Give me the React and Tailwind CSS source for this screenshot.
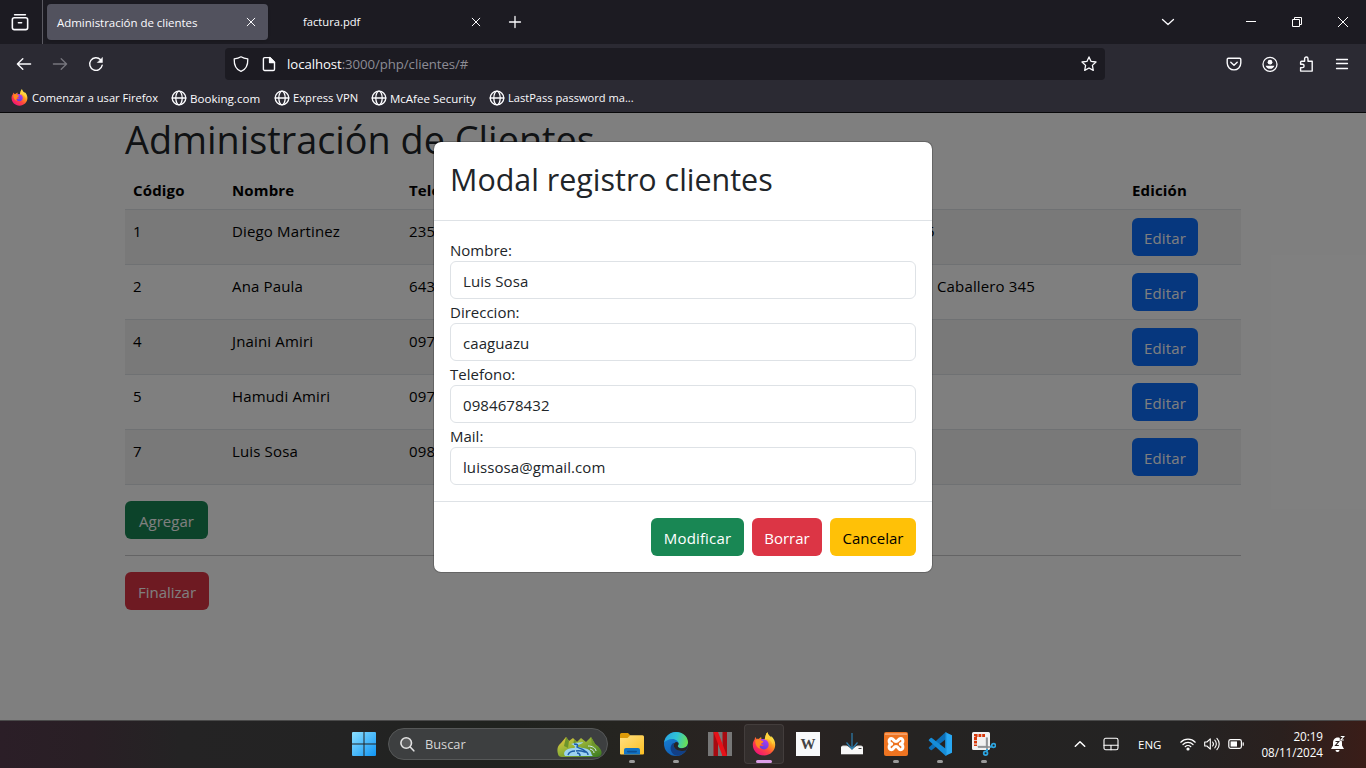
import React from "react";

const CLIENTS = [
  { id: "1", name: "Diego Martinez", phone: "235", address: "5", off: "pl-[2px]" },
  { id: "2", name: "Ana Paula", phone: "643", address: "Caballero 345", off: "pl-[13px]" },
  { id: "4", name: "Jnaini Amiri", phone: "097", address: "", off: "" },
  { id: "5", name: "Hamudi Amiri", phone: "097", address: "", off: "" },
  { id: "7", name: "Luis Sosa", phone: "098", address: "", off: "" },
];

const FIELDS = [
  ["Nombre:", "Luis Sosa"],
  ["Direccion:", "caaguazu"],
  ["Telefono:", "0984678432"],
  ["Mail:", "luissosa@gmail.com"],
];

function Icon({ size = 16, sw = 1.3, className = "", children }) {
  return (
    <svg width={size} height={size} viewBox="0 0 16 16" fill="none" stroke="currentColor" strokeWidth={sw} strokeLinecap="round" strokeLinejoin="round" className={`block shrink-0 ${className}`}>
      {children}
    </svg>
  );
}

const Close = () => (
  <Icon size={16} sw={1}>
    <path d="M4.2 4.2l7.6 7.6M11.8 4.2l-7.6 7.6" />
  </Icon>
);

function Globe() {
  return (
    <Icon size={16} sw={1.3}>
      <circle cx="8" cy="8" r="6.8" />
      <ellipse cx="8" cy="8" rx="3.2" ry="6.8" />
      <path d="M1.2 8h13.6" />
    </Icon>
  );
}

function Firefox({ size, id }) {
  return (
    <svg width={size} height={size} viewBox="0 0 24 24" className="block shrink-0">
      <defs>
        <linearGradient id={`${id}a`} x1="0.85" y1="0.1" x2="0.2" y2="0.95">
          <stop offset="0.05" stopColor="#fff44f" />
          <stop offset="0.35" stopColor="#ff9a1f" />
          <stop offset="0.62" stopColor="#ff4a3d" />
          <stop offset="1" stopColor="#f0107a" />
        </linearGradient>
        <linearGradient id={`${id}b`} x1="0.7" y1="0" x2="0.3" y2="1">
          <stop offset="0" stopColor="#b23af2" />
          <stop offset="1" stopColor="#5b3fe0" />
        </linearGradient>
      </defs>
      <path d="M3.6 5.1c.2.9.5 1.4.9 1.9.8-.3 1.6-.3 2.3-.1.9-1.2 1.9-1.7 2.5-2-.3 1-.1 2 .9 2.5l2.3.7C13.600 5 13.300 2 15.500.3c.3 2.100 1.500 3.200 2.800 4.300l.8 1c.2-.5.2-1 .1-1.500 2.600 2.300 4 5.600 4 8.700 0 6-4.900 10.700-11.200 10.700S.8 18.800.8 12.700c0-2.500.8-4.200 1.800-5.300.1-.9.5-1.700 1-2.300z" fill={`url(#${id}a)`} />
      <path d="M8.600 7.300c3-1 7.400.5 8 4.400.5 3.100-1.700 5.700-4.500 5.700-2.700 0-4.600-1.800-4.600-3.900 1.400.7 3.500.8 4.500-.7-1.400.2-2.600-.4-2.800-1.200.8-1 1.900-.9 2.200-1.700-.8-.9-1.900-.5-2.500-1.100z" fill={`url(#${id}b)`} />
      <path d="M3.200 8.500c1.500-1.500 4.500-1.300 5.800-.2.800.7 2 .5 2.400 1.100-.3.900-1.900 1.100-2.500 2.300-.3.800.4 1.400-.7 1.600-1.200.8-.7 2.500.5 3.400-3.200-.3-5.600-3.800-5.500-8.200z" fill="#ff8a1e" />
      <path d="M15.500.3c.3 2.100 1.500 3.200 2.800 4.300 2.700 2.600 3.100 5.500 2.400 8.200-.3-2.100-1.600-4.300-3.800-5.200-1.300-1-2.900-.8-4.400.5C13.600 5 13.300 2 15.500.3z" fill="#ffd33c" />
    </svg>
  );
}

function Bookmark({ icon, children, className }) {
  return (
    <div className={`flex items-center gap-[3px] ${className}`}>
      {icon || <Globe />}
      <span className="pt-px whitespace-nowrap">{children}</span>
    </div>
  );
}

function Browser() {
  return (
    <header className="flex h-[113px] flex-col border-b border-[#08080a] bg-[#2b2a33] text-[#fbfbfe]">
      <div className="flex h-11 shrink-0 items-center bg-[#1c1b22] text-[11px]">
        <div className="flex h-full w-[43px] items-center justify-center border-r border-[#5b5a62] pr-[3px]">
          <Icon size={18} sw={1.4}>
            <path d="M3.200 1.600h9.600" />
            <rect x="1.200" y="4.200" width="13.600" height="10.600" rx="1.700" />
            <path d="M6.600 8.600h2.800" />
          </Icon>
        </div>
        <div className="ml-1 flex h-9 w-[221px] items-center justify-between rounded bg-[#52525e] pr-[9px] pl-[10px] shadow">
          <span className="pt-px text-[11.500px] tracking-[-0.030px]">Administración de clientes</span>
          <Close />
        </div>
        <div className="flex h-9 w-[225px] items-center justify-between pr-[9px] pl-[35px]">
          <span className="pt-px text-[11.200px]">factura.pdf</span>
          <Close />
        </div>
        <div className="ml-[14px]">
          <Icon size={16} sw={1.3}>
            <path d="M8 2.500v11M2.500 8h11" />
          </Icon>
        </div>
        <div className="ml-auto flex items-center">
          <Icon size={16} sw={1.3}>
            <path d="M2.500 5.500l5.500 5 5.500-5" />
          </Icon>
          <svg width="12" height="12" viewBox="0 0 12 12" className="ml-[69px]" stroke="#fff" fill="none">
            <path d="M1 5.500h10" />
          </svg>
          <svg width="12" height="12" viewBox="0 0 12 12" className="ml-[34px]" stroke="#fff" fill="none">
            <path d="M1.500 3.500h7v7h-7zM3.500 3.500v-2h7v7h-2" />
          </svg>
          <svg width="12" height="12" viewBox="0 0 12 12" className="mr-[17px] ml-[34px]" stroke="#fff" fill="none">
            <path d="M1 1l10 10M11 1L1 11" />
          </svg>
        </div>
      </div>
      <div className="flex h-10 shrink-0 items-center">
        <Icon size={16} sw={1.400} className="ml-4">
          <path d="M14.600 8H1.400M6.800 2.800L1.400 8l5.400 5.200" />
        </Icon>
        <Icon size={16} sw={1.300} className="ml-5 text-[#77767e]">
          <path d="M1.400 8h13.200M9.200 2.800L14.600 8l-5.400 5.200" />
        </Icon>
        <Icon size={16} sw={1.400} className="ml-5">
          <path d="M14.200 9.200A6.300 6.300 0 1 1 12.600 3.700" />
          <path d="M14.400 1.800v4.700H9.700z" fill="currentColor" strokeWidth="0.6" />
        </Icon>
        <div className="ml-[121px] flex h-8 w-[880px] items-center rounded bg-[#1c1b22] pl-2">
          <Icon size={16} sw={1.300}>
            <path d="M8 .8c2 1.300 4.300 1.900 6.800 2.100C15 8.800 12.800 13.500 8 15.300 3.200 13.500 1 8.800 1.200 2.900 3.700 2.700 6 2.100 8 .8z" />
          </Icon>
          <Icon size={16} sw={1.400} className="ml-3">
            <path d="M3.700 1.600h5.100l4.700 4.700v6.900a1.300 1.300 0 0 1-1.300 1.300H3.700a1.300 1.300 0 0 1-1.300-1.300V2.900a1.300 1.300 0 0 1 1.300-1.300z" />
            <path d="M8.600 1.600v4.900h4.900z" fill="currentColor" />
          </Icon>
          <span className="ml-[10px] pt-[2px] text-[13.200px] tracking-[-0.060px] text-[#fbfbfe]">
            localhost<span className="text-[#8d8c95]">:3000/php/clientes/#</span>
          </span>
          <Icon size={16} sw={1.300} className="mr-2 ml-auto">
            <path d="M8 .9l2.100 4.500 4.900.6-3.600 3.400.9 5L8 12l-4.300 2.400.9-5L1 6l4.900-.6z" />
          </Icon>
        </div>
        <div className="mr-4 ml-auto flex items-center gap-5">
          <Icon size={16} sw={1.400}>
            <path d="M2.400 2.200h11.200a1.200 1.200 0 0 1 1.200 1.200v3.700a6.800 6.800 0 0 1-13.600 0V3.400a1.200 1.200 0 0 1 1.200-1.200z" />
            <path d="M4.800 6.300L8 9.300l3.200-3" />
          </Icon>
          <Icon size={16} sw={1.300}>
            <circle cx="8" cy="8.300" r="7" />
            <circle cx="8" cy="6.200" r="2.400" fill="currentColor" stroke="none" />
            <path d="M3.600 9.700h8.800A4.600 4.600 0 0 1 8 12.800a4.600 4.600 0 0 1-4.400-3.100z" fill="currentColor" stroke="none" />
          </Icon>
          <Icon size={16} sw={1.400}>
            <path d="M3.600 5.200h3V2.700a1.700 1.700 0 0 1 3.400 0v2.500h4.200v9.900H2.600v-3.500h1.800a1.700 1.700 0 0 0 0-3.400H2.600V6.200a1 1 0 0 1 1-1z" />
          </Icon>
          <Icon size={16} sw={1.300}>
            <path d="M2.500 3.500h11M2.500 7.500h11M2.500 12.500h11" />
          </Icon>
        </div>
      </div>
      <div className="flex h-7 shrink-0 items-center pl-[11px] text-[11px]">
        <Bookmark className="w-[160px] gap-[4px] text-[11.100px]" icon={<Firefox size={17} id="fb" />}>Comenzar a usar Firefox</Bookmark>
        <Bookmark className="w-[103px] text-[11.600px]">Booking.com</Bookmark>
        <Bookmark className="w-[97px] text-[11.200px]">Express VPN</Bookmark>
        <Bookmark className="w-[118px] text-[11.500px]">McAfee Security</Bookmark>
        <Bookmark className="text-[11.100px]">LastPass password ma...</Bookmark>
      </div>
    </header>
  );
}

function Button({ className, children }) {
  return (
    <button className={`flex h-[38px] items-center justify-center rounded-md pt-[2px] text-[15px] leading-6 ${className}`}>
      {children}
    </button>
  );
}

function ClientsPage() {
  return (
    <div className="mx-auto w-[1116px] text-[#212529]">
      <h1 className="mb-2 h-12 text-[37.800px] leading-[54px]">Administración de Clientes</h1>
      <table className="w-full table-fixed border-collapse text-left text-[15px] leading-6 tracking-[0.150px] text-black">
        <colgroup>
          <col className="w-[99px]" />
          <col className="w-[177px]" />
          <col className="w-[393px]" />
          <col className="w-[330px]" />
          <col className="w-[117px]" />
        </colgroup>
        <thead>
          <tr className="h-[40px] border-b border-[#dee2e6] font-bold">
            <th className="px-2 pt-[3px]">Código</th>
            <th className="px-2 pt-[3px]">Nombre</th>
            <th className="px-2 pt-[3px]">Telé</th>
            <th className="px-2"></th>
            <th className="px-2 pt-[3px]">Edición</th>
          </tr>
        </thead>
        <tbody>
          {CLIENTS.map((c) => (
            <tr key={c.id} className="h-[55px] border-b border-[#dee2e6] align-top odd:bg-[#f2f2f2]">
              <td className="px-2 pt-[9px]">{c.id}</td>
              <td className="px-2 pt-[9px]">{c.name}</td>
              <td className="px-2 pt-[9px]">{c.phone}</td>
              <td className="pt-[9px]">
                <div className="flex pl-[130px]">
                  <span className={c.off}>{c.address}</span>
                </div>
              </td>
              <td className="p-2">
                <Button className="w-[66px] bg-[#0d6efd] text-white">Editar</Button>
              </td>
            </tr>
          ))}
        </tbody>
      </table>
      <Button className="mt-4 w-[83px] bg-[#198754] text-white">Agregar</Button>
      <hr className="my-4 border-t border-[#c8c9ca]" />
      <Button className="w-[84px] bg-[#dc3545] text-white">Finalizar</Button>
    </div>
  );
}

function Modal() {
  return (
    <div className="flex h-[432px] w-[500px] flex-col rounded-lg border border-black/20 bg-white bg-clip-padding text-[15px] text-[#212529]">
      <div className="h-[79px] border-b border-[#dee2e6] p-4">
        <h2 className="text-[30.450px] leading-[42px]">Modal registro clientes</h2>
      </div>
      <div className="h-[280px] p-4">
        {FIELDS.map(([label, value]) => (
          <label key={label} className="block h-[62px]">
            <span className="block h-6 leading-[26px]">{label}</span>
            <span className="flex h-[38px] items-center rounded-md border border-[#dee2e6] pt-[2px] pl-3 tracking-[0.080px]">{value}</span>
          </label>
        ))}
      </div>
      <div className="flex h-[71px] justify-end gap-2 border-t border-[#dee2e6] p-4">
        <Button className="w-[93px] bg-[#198754] tracking-[0.150px] text-white">Modificar</Button>
        <Button className="w-[70px] bg-[#dc3545] text-white">Borrar</Button>
        <Button className="w-[86px] bg-[#ffc107] text-black">Cancelar</Button>
      </div>
    </div>
  );
}

const Svg24 = ({ children }) => (
  <svg width="24" height="24" viewBox="0 0 24 24" className="block">
    {children}
  </svg>
);

const Explorer = () => (
  <Svg24>
    <defs>
      <linearGradient id="ex" x1="0" y1="0" x2="1" y2="1">
        <stop stopColor="#ffe083" />
        <stop offset="1" stopColor="#fcbf22" />
      </linearGradient>
    </defs>
    <path d="M0 2.500A1.500 1.500 0 0 1 1.500 1H8l2.500 2.500L8 7H0z" fill="#dd9a08" />
    <path d="M0 6h7.500l2.800-2.700H22.500A1.500 1.500 0 0 1 24 4.800V21.500a1 1 0 0 1-1 1H1a1 1 0 0 1-1-1z" fill="url(#ex)" />
    <path d="M4 22.500V18a2 2 0 0 1 2-2h12a2 2 0 0 1 2 2v4.500z" fill="#1173c4" />
    <rect x="7" y="18.800" width="10" height="1.600" rx=".8" fill="#0b4f92" />
  </Svg24>
);

const Edge = () => (
  <Svg24>
    <defs>
      <linearGradient id="e1" x1="0" y1="0.300" x2="1" y2="0.500">
        <stop stopColor="#2aa5e0" />
        <stop offset="0.500" stopColor="#2fc3d6" />
        <stop offset="1" stopColor="#6be052" />
      </linearGradient>
      <linearGradient id="e2" x1="0" y1="0" x2="0.500" y2="1">
        <stop stopColor="#1a86d8" />
        <stop offset="1" stopColor="#0f5db3" />
      </linearGradient>
    </defs>
    <circle cx="12" cy="12" r="12" fill="url(#e2)" />
    <path d="M.2 10.500C1 4.300 6 0 12 0c6.800 0 12 4.800 12 10.300 0 3.600-2.800 5.900-6 5.900-2.600 0-4.200-1-4.200-2 0-.6.800-.9.800-2.600C14.600 9.300 12 6.900 8.400 6.900 4.500 6.900 1.400 8.700.2 10.500z" fill="url(#e1)" />
    <path d="M8.600 11.500c-1.300 1.300-2 3-2 4.800 0 4 3.300 7.500 7.200 7.500 3.600-.7 6.500-2.500 8.300-5.200.4-.6 0-.9-.6-.6-1 .5-2.500.9-4 .9-4.500 0-7.900-3-7.900-6 0-.6.200-1.200.5-1.800-.5 0-1.100.100-1.500.400z" fill="#123f85" />
    <path d="M14 14.800c.7 1 2.100 1.500 4 1.500 3.200 0 5.600-1.900 6-4.700.2 2.100-.5 4.600-1.800 6.700-1 .5-2.600.8-4.700.8-4.500 0-7.900-3-7.900-6 0-1.900 1.600-3.200 2.900-3.200 1.200 0 2.100.8 2.100 1.800 0 1.300-1.400 1.800-.6 3.100z" fill="#292524" />
  </Svg24>
);

const Netflix = () => (
  <Svg24>
    <path d="M0 0h24v24H0z" fill="#777" />
    <path d="M5.500 0h4.500v24H5.500zM14.500 0H19v24h-4.500z" fill="#a80b11" />
    <path d="M5.500 0h4.500L19 24h-4.500z" fill="#e61219" />
  </Svg24>
);

const Wiki = () => (
  <div className="flex h-6 w-6 items-center justify-center bg-[#f8f9fa] pt-px font-['Liberation_Serif',serif] text-[15px] leading-none font-bold text-[#444]">W</div>
);

const Installer = () => (
  <Svg24>
    <path d="M2.500 13.500h19l1 1.500h-21z" fill="#d5d5d5" />
    <path d="M1 14.500h22v7.800H1z" fill="#f8f8f8" />
    <path d="M18.500 16.500h3" stroke="#444" />
    <path d="M6.500 13L12 17.500l5.500-4.500z" fill="#292524" />
    <path d="M12 1v16M6.500 10.500L12 17l5.500-6.500" fill="none" stroke="#2e7fb0" strokeWidth="1.200" />
  </Svg24>
);

const Xampp = () => (
  <Svg24>
    <rect width="24" height="24" rx="2" fill="#ee7421" />
    <path d="M1 1.200h22v1.800H1z" fill="#f6a068" />
    <g fill="none" stroke="#fff" strokeWidth="3" strokeLinejoin="round" strokeLinecap="round">
      <path d="M7.500 12C4.400 11.500 4.300 6.500 7.300 6.500c2.500 0 2.200 3 4.700 3s2.200-3 4.700-3c3 0 2.900 5-.2 5.500" />
      <path d="M7.500 12c-3.100.5-3.200 5.700-.2 5.700 2.500 0 2.200-3.200 4.700-3.200s2.200 3.200 4.700 3.200c3 0 2.900-5.200-.2-5.700" />
    </g>
  </Svg24>
);

const VSCode = () => (
  <Svg24>
    <path d="M17.500.2L24 3.200v17.600l-6.500 3z" fill="#29a8f3" />
    <path d="M17.500.2L1 15.200a1 1 0 0 0 0 1.400l1.700 1.500a1 1 0 0 0 1.200 0L18 7z" fill="#0c6fb8" />
    <path d="M17.500 23.800L1 8.800a1 1 0 0 1 0-1.400l1.700-1.500a1 1 0 0 1 1.200 0L18 17z" fill="#168dd9" />
    <path d="M17.500.2L19 1v22l-1.500.8z" fill="#1f9be8" />
  </Svg24>
);

const Snip = () => (
  <Svg24>
    <path d="M1.500 0h15A1.500 1.500 0 0 1 18 1.500v15A1.500 1.500 0 0 1 16.500 18h-15A1.500 1.500 0 0 1 0 16.500v-15A1.500 1.500 0 0 1 1.500 0z" fill="#f1f1f1" />
    <path d="M13 3.500H3.500V14" fill="none" stroke="#d8380b" strokeWidth="3" strokeDasharray="2.800 0.900" />
    <path d="M5.500 14.500h9V5.500" fill="none" stroke="#b4b7ba" strokeWidth="1.600" />
    <path d="M15 5.500V17M6 15h13" fill="none" stroke="#85888b" strokeWidth="1.500" />
    <path d="M15 17v2M18 14.500h2" stroke="#2da5e0" strokeWidth="2" />
    <circle cx="13.600" cy="21.200" r="1.900" fill="none" stroke="#2da5e0" strokeWidth="1.700" />
    <circle cx="21.600" cy="13.500" r="1.900" fill="none" stroke="#2da5e0" strokeWidth="1.700" />
  </Svg24>
);

const Landscape = () => (
  <svg width="46" height="21" viewBox="0 0 46 21" className="block">
    <defs>
      <linearGradient id="ls" x1="0" y1="0" x2="1" y2="1">
        <stop stopColor="#f3c33a" />
        <stop offset=".35" stopColor="#a2b93a" />
        <stop offset="1" stopColor="#35781f" />
      </linearGradient>
    </defs>
    <path d="M1 18C0 14 0 10 4 7l5-6 3 4 4-3 4 4 4-4 5 4 5-5 4 7c5 3 8 8 6 11-1 2-4 2-6 2H5c-2 0-4-1-4-3z" fill="url(#ls)" />
    <path d="M9 1l-2 9 4 2 1-7zM34 1l1 8 5 2-3-5zM20 6l-4 3 1-5z" fill="#6d942b" />
    <path d="M14 8c5-2 9-1 12-2-1 3-6 2-6 4 0 2 8 1 12 4 3 2 2 5 4 6H8c-3-4 2-8 8-8 3 0 3-2-2-4z" fill="#9cd3f0" />
    <path d="M17 8c4 0 4 1 3 3 3 2 8 2 8 5-3-1-6-2-9-1M11 19c1-3 4-4 7-4M23 20c0-2-1-3-3-3M31 19c0-2-2-4-4-4" stroke="#1e5da6" strokeWidth="1.500" fill="none" />
    <path d="M31 10c4 0 8 2 8 5M33 13c3 1 4 2 4 4" stroke="#cfe9f4" fill="none" />
  </svg>
);

function TaskButton({ children, running, active }) {
  return (
    <div className={`relative flex h-10 w-10 shrink-0 items-center justify-center rounded ${active ? "border border-white/8 bg-white/5" : ""}`}>
      {children}
      {running && <span className={active ? "absolute bottom-0 h-[3px] w-4 rounded-full bg-[#dd9fe8]" : "absolute bottom-[1px] h-[3px] w-[6px] rounded-full bg-[#9a9a9a]"} />}
    </div>
  );
}

function Taskbar() {
  return (
    <footer className="flex h-12 items-center border-t border-[#4a4a4a] bg-[linear-gradient(90deg,#2b1e27_0px,#291f25_90px,#242324_180px,#232323_350px,#20231f_500px,#252420_620px,#2a2322_760px,#252322_900px,#242323_1180px,#2a201e_1280px,#3a1d18_1366px)] pb-px text-white">
      <div className="ml-[344px] flex items-center gap-1">
        <TaskButton>
          <Svg24>
            <defs>
              <linearGradient id="wn" gradientUnits="userSpaceOnUse" x1="0" y1="0" x2="24" y2="24">
                <stop stopColor="#8be0ff" />
                <stop offset="1" stopColor="#0f95f5" />
              </linearGradient>
            </defs>
            <path d="M0 1a1 1 0 0 1 1-1h10.500v11.500H0zM12.500 0H23a1 1 0 0 1 1 1v10.500H12.500zM0 12.500h11.500V24H1a1 1 0 0 1-1-1zM12.500 12.500H24V23a1 1 0 0 1-1 1H12.500z" fill="url(#wn)" />
          </Svg24>
        </TaskButton>
        <div className="flex h-8 w-[220px] items-center rounded-full border border-[#565858] bg-[#3d3f40] pl-[10px]">
          <Icon size={16} sw={1.600} className="text-[#e2e2e2]">
            <circle cx="7.200" cy="7" r="5.300" fill="#5c5d5e" />
            <path d="M11.200 11l3.600 3.800" />
          </Icon>
          <span className="ml-[10px] pt-px text-[12.800px] text-[#d6d6d6]">Buscar</span>
          <div className="mt-1 mr-[4px] ml-auto">
            <Landscape />
          </div>
        </div>
        <TaskButton running><Explorer /></TaskButton>
        <TaskButton running><Edge /></TaskButton>
        <TaskButton><Netflix /></TaskButton>
        <TaskButton running active><Firefox size={24} id="ft" /></TaskButton>
        <TaskButton><Wiki /></TaskButton>
        <TaskButton><Installer /></TaskButton>
        <TaskButton running><Xampp /></TaskButton>
        <TaskButton running><VSCode /></TaskButton>
        <TaskButton running><Snip /></TaskButton>
      </div>
      <div className="ml-auto flex items-center text-[11px]">
        <Icon size={16} sw={1.500}>
          <path d="M3.300 10.300L8 5.700l4.700 4.600" />
        </Icon>
        <Icon size={16} sw={1.100} className="ml-[15px]">
          <rect x="1" y="2.300" width="14" height="11.400" rx="1.800" />
          <path d="M1 9.300h14M8 9.300v4.400" />
        </Icon>
        <span className="ml-[19px] w-[24px] pt-[2px] text-[11.500px]">ENG</span>
        <Icon size={16} sw={1.200} className="ml-[18px]">
          <path d="M.8 6.200a10.200 10.200 0 0 1 14.400 0M3 8.500a7.100 7.100 0 0 1 10 0M5.200 10.700a4 4 0 0 1 5.600 0" />
          <circle cx="8" cy="13" r="1" fill="currentColor" />
        </Icon>
        <Icon size={16} sw={1.100} className="ml-[8px]">
          <path d="M.7 6h2.200L6.300 2.900v10.200L2.900 10H.7zM8.600 6a3 3 0 0 1 0 4M10.800 4.200a5.500 5.500 0 0 1 0 7.600M12.900 2.300a8.200 8.200 0 0 1 0 11.400" />
        </Icon>
        <Icon size={16} sw={1.200} className="ml-[8px]">
          <rect x=".8" y="3.600" width="12.600" height="8.800" rx="1.800" />
          <rect x="2.600" y="5.400" width="6.400" height="5.200" fill="currentColor" stroke="none" />
          <path d="M15.200 6.800v2.400" />
        </Icon>
        <div className="ml-[15px] w-[64px] text-right text-[11.700px] leading-4 tracking-[-0.050px] whitespace-nowrap">
          <div>20:19</div>
          <div>08/11/2024</div>
        </div>
        <svg width="16" height="18" viewBox="0 0 16 18" className="mr-[20px] ml-[7px] block">
          <path d="M8 2.500C4.500 2.500 3 5 3 8v2.500L1 14h13l-2-3.500V8c0-3-1-5.500-4-5.500z" fill="#fff" />
          <path d="M5.500 15h4a2 2 0 0 1-4 0z" fill="#fff" />
          <path d="M5.500 6.500h3.300L5.500 10.500h3.300" fill="none" stroke="#291f1e" strokeWidth="1.100" />
          <path d="M9.800 0h5v6h-5z" fill="#301f1b" />
          <path d="M10.800 1.500h3l-3 3.500h3" fill="none" stroke="#fff" strokeWidth="1.100" />
        </svg>
      </div>
    </footer>
  );
}

export default function App() {
  return (
    <div className="flex h-[768px] w-[1366px] flex-col overflow-hidden bg-white font-['Open_Sans','Noto_Sans',sans-serif]">
      <Browser />
      <main className="relative h-[607px] shrink-0 overflow-hidden bg-white">
        <ClientsPage />
        <div className="absolute inset-0 flex items-start justify-center bg-black/50 pt-[28px]">
          <Modal />
        </div>
      </main>
      <Taskbar />
    </div>
  );
}
